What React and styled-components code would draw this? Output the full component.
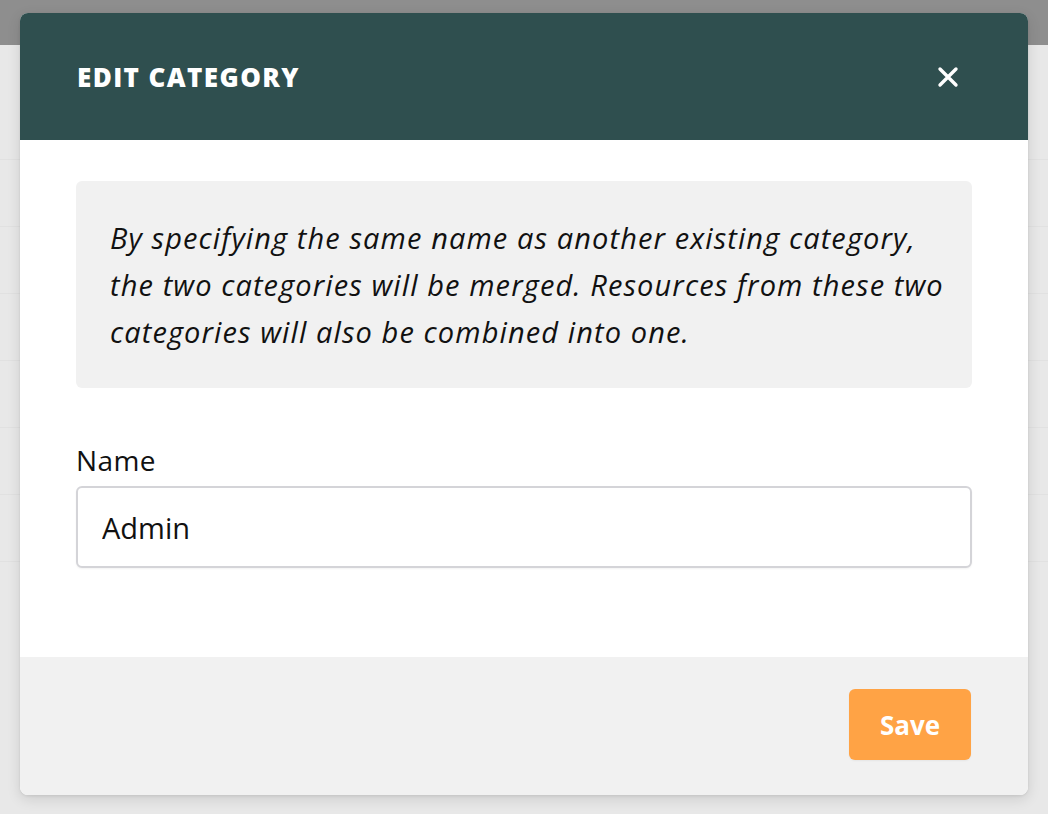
import styled, { createGlobalStyle } from 'styled-components'
import { useState } from 'react'

const GlobalStyle = createGlobalStyle`
  html, body {
    margin: 0;
    padding: 0;
  }
  body {
    font-family: "Open Sans", Lato, sans-serif;
    background: #e9e9e9;
  }
`

const Page = styled.div`
  position: relative;
  width: 1048px;
  height: 814px;
  overflow: hidden;
  background: #e8e8e8;
`

const TopBar = styled.div`
  height: 45px;
  background: #8e8e8e;
`

const Rows = styled.div`
  display: flex;
  flex-direction: column;
  padding-top: 48px;
`

const Row = styled.div`
  height: 66px;
  border-bottom: 1px solid #e1e1e1;
`

const Backdrop = styled.div`
  position: absolute;
  inset: 0;
  display: flex;
  justify-content: center;
  padding-top: 13px;
`

const Modal = styled.div`
  width: 1008px;
  height: 782px;
  border-radius: 8px;
  overflow: hidden;
  display: flex;
  flex-direction: column;
  background: #fff;
  box-shadow: 0 4px 14px rgba(0, 0, 0, 0.12), 0 1px 3px rgba(0, 0, 0, 0.08);
`

const Header = styled.div`
  height: 127px;
  flex-shrink: 0;
  background: #2f4f4f;
  display: flex;
  align-items: center;
  justify-content: space-between;
  padding: 0 60px 0 57px;
`

const Title = styled.h2`
  margin: 0;
  color: #fff;
  font-size: 26px;
  font-weight: 800;
  letter-spacing: 1.4px;
  text-transform: uppercase;
`

const CloseButton = styled.button`
  background: transparent;
  border: none;
  padding: 0;
  width: 40px;
  height: 40px;
  display: flex;
  align-items: center;
  justify-content: center;
  cursor: pointer;
`

const Body = styled.div`
  flex: 1;
  padding: 41px 56px 0 56px;
  display: flex;
  flex-direction: column;
`

const Notice = styled.p`
  margin: 0;
  background: #f1f1f1;
  border-radius: 6px;
  padding: 33px 20px 33px 34px;
  font-size: 29px;
  line-height: 47px;
  letter-spacing: 1.1px;
  font-style: italic;
  color: #111;
  white-space: nowrap;
`

const Field = styled.label`
  display: flex;
  flex-direction: column;
  margin-top: 53px;
`

const Label = styled.span`
  font-size: 28px;
  line-height: 38px;
  letter-spacing: 0.4px;
  color: #111;
  margin-bottom: 7px;
`

const Input = styled.input`
  box-sizing: border-box;
  height: 82px;
  border: 2px solid #d4d4d8;
  border-radius: 6px;
  padding: 0 24px;
  font-family: inherit;
  font-size: 29px;
  color: #111;
  outline: none;
  box-shadow: 0 1px 2px rgba(0, 0, 0, 0.05);
`

const Footer = styled.div`
  height: 138px;
  flex-shrink: 0;
  background: #f1f1f1;
  display: flex;
  justify-content: flex-end;
  align-items: flex-start;
  padding: 32px 57px 0 0;
  box-sizing: border-box;
`

const SaveButton = styled.button`
  width: 122px;
  height: 71px;
  border: none;
  border-radius: 6px;
  background: #ffa345;
  color: #fff;
  font-family: inherit;
  font-size: 26px;
  font-weight: 700;
  cursor: pointer;
  box-shadow: 0 1px 2px rgba(0, 0, 0, 0.05);
`

function CloseIcon() {
  return (
    <svg width="22" height="22" viewBox="0 0 22 22" fill="none">
      <path
        d="M3 3 L19 19 M19 3 L3 19"
        stroke="#fff"
        strokeWidth="3.4"
        strokeLinecap="round"
      />
    </svg>
  )
}

function App() {
  const [name, setName] = useState('Admin')
  return (
    <>
      <GlobalStyle />
      <Page>
        <TopBar />
        <Rows>
          {[0, 1, 2, 3, 4, 5, 6].map((i) => (
            <Row key={i} />
          ))}
        </Rows>
        <Backdrop>
          <Modal>
            <Header>
              <Title>Edit Category</Title>
              <CloseButton aria-label="Close">
                <CloseIcon />
              </CloseButton>
            </Header>
            <Body>
              <Notice>
                By specifying the same name as another existing category,
                <br />
                the two categories will be merged. Resources from these two
                <br />
                categories will also be combined into one.
              </Notice>
              <Field>
                <Label>Name</Label>
                <Input value={name} onChange={(e) => setName(e.target.value)} />
              </Field>
            </Body>
            <Footer>
              <SaveButton>Save</SaveButton>
            </Footer>
          </Modal>
        </Backdrop>
      </Page>
    </>
  )
}

export default App
